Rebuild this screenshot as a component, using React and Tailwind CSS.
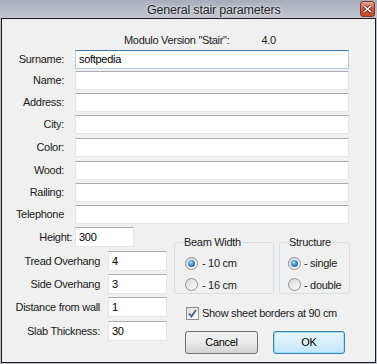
import React from 'react';

const font = { fontFamily: '"Liberation Sans", Arial, sans-serif' };

function TextBox({ value, focused, className }) {
  return (
    <div
      className={
        'bg-white border text-[11px] leading-none flex items-center pl-[3px] text-black ' +
        (focused
          ? 'border-[#b5cfe7] border-t-[#3d7bad] '
          : 'border-[#e2e6ec] border-t-[#abadb3] ') +
        className
      }
    >
      {value}
    </div>
  );
}

function Radio({ checked }) {
  return (
    <div className="w-[13px] h-[13px] rounded-full border border-[#8e8f8f] bg-gradient-to-br from-[#d9d9d9] to-[#fbfbfb] flex items-center justify-center">
      {checked && (
        <div className="w-[7px] h-[7px] rounded-full bg-[radial-gradient(circle_at_40%_35%,#a8dcf8,#2a73b8_60%,#1b4f86)]" />
      )}
    </div>
  );
}

function GroupBox({ title, className, children }) {
  return (
    <div className={'relative border border-[#d5dfe5] rounded-[3px] ' + className}>
      <span className="absolute -top-[7px] left-[8px] px-[1px] bg-[#f0f0f0] text-[11px] leading-[12px] tracking-[-0.3px]">
        {title}
      </span>
      {children}
    </div>
  );
}

export default function App() {
  const rows = [
    { label: 'Surname:', value: 'softpedia', mt: 'mt-[3px]', focused: true },
    { label: 'Name:', mt: 'mt-[2px]' },
    { label: 'Address:', mt: 'mt-[3px]' },
    { label: 'City:', mt: 'mt-[3px]' },
    { label: 'Color:', mt: 'mt-[4px]' },
    { label: 'Wood:', mt: 'mt-[4px]' },
    { label: 'Railing:', mt: 'mt-[3px]' },
    { label: 'Telephone', mt: 'mt-[3px]' },
  ];

  const params = [
    { label: 'Tread Overhang', value: '4', mt: 'mt-[4px]' },
    { label: 'Side Overhang', value: '3', mt: 'mt-[3px]' },
    { label: 'Distance from wall', value: '1', mt: 'mt-[3px]' },
    { label: 'Slab Thickness:', value: '30', mt: 'mt-[4px]' },
  ];

  return (
    <div className="w-[377px] h-[364px] bg-[#bcc1cb] overflow-hidden text-[#1a1a1a]" style={font}>
      {/* Title bar */}
      <div className="h-[18px] flex items-center bg-gradient-to-b from-[#a7adb9] via-[#b4b9c4] to-[#c2c6cf] relative">
        <span className="absolute left-[147px] top-[1px] text-[12.5px] tracking-[-0.2px] text-[#1e1e1e] [text-shadow:0_0_5px_#e8ebf0,0_0_2px_#e8ebf0]">
          General stair parameters
        </span>
        <div className="ml-auto mr-[2px] mb-[1px] w-[15px] h-[16px] rounded-[3px] border border-[#7a3b2e] bg-gradient-to-b from-[#e8a493] via-[#d2553a] to-[#c44a2c] flex items-center justify-center">
          <svg width="9" height="8" viewBox="0 0 9 8">
            <path d="M1 1 L8 7 M8 1 L1 7" stroke="#5a2418" strokeWidth="3" />
            <path d="M1 1 L8 7 M8 1 L1 7" stroke="#ffffff" strokeWidth="1.6" />
          </svg>
        </div>
      </div>

      {/* Dialog body */}
      <div className="ml-[1px] w-[375px] h-[345px] border border-[#1b1b1b] bg-[#f0f0f0] text-[11px] tracking-[-0.3px]">
        <div className="mt-[14px] h-[14px] flex items-center">
          <span className="ml-[122px]">Modulo Version "Stair":</span>
          <span className="ml-[32px]">4.0</span>
        </div>

        {rows.map((r) => (
          <div key={r.label} className={'flex items-center ' + r.mt}>
            <div className="w-[62px] text-right">{r.label}</div>
            <TextBox value={r.value} focused={r.focused} className="ml-[11px] w-[274px] h-[19px]" />
          </div>
        ))}

        <div className="flex mt-[3px]">
          {/* Left parameters */}
          <div className="w-[172px]">
            <div className="flex items-center">
              <div className="w-[70px] text-right">Height:</div>
              <TextBox value="300" className="ml-[3px] w-[59px] h-[20px]" />
            </div>
            {params.map((p) => (
              <div key={p.label} className={'flex items-center ' + p.mt}>
                <div className="w-[98px] text-right">{p.label}</div>
                <TextBox value={p.value} className="ml-[8px] w-[59px] h-[20px]" />
              </div>
            ))}
          </div>

          {/* Right options */}
          <div className="flex flex-col">
            <div className="flex mt-[15px] gap-[5px]">
              <GroupBox title="Beam Width" className="w-[100px] h-[52px] pl-[10px] pt-[12px]">
                <div className="flex items-center gap-[4px]">
                  <Radio checked />
                  <span>- 10 cm</span>
                </div>
                <div className="flex items-center gap-[4px] mt-[5px]">
                  <Radio />
                  <span>- 16 cm</span>
                </div>
              </GroupBox>
              <GroupBox title="Structure" className="w-[71px] h-[52px] pl-[8px] pt-[12px]">
                <div className="flex items-center gap-[3px]">
                  <Radio checked />
                  <span>- single</span>
                </div>
                <div className="flex items-center gap-[3px] mt-[5px]">
                  <Radio />
                  <span>- double</span>
                </div>
              </GroupBox>
            </div>

            <div className="flex items-center mt-[11px] ml-[12px] gap-[3px]">
              <div className="w-[13px] h-[13px] border border-[#8f8f8f] bg-gradient-to-br from-[#dcdcdc] to-[#fdfdfd] flex items-center justify-center">
                <svg width="9" height="9" viewBox="0 0 9 9">
                  <path d="M1 4.5 L3.5 7.5 L8 1" fill="none" stroke="#4a5f97" strokeWidth="1.8" />
                </svg>
              </div>
              <span>Show sheet borders at 90 cm</span>
            </div>

            <div className="flex mt-[9px] ml-[11px] gap-[15px]">
              <button className="w-[73px] h-[23px] rounded-[3px] border border-[#707070] bg-gradient-to-b from-[#f2f2f2] via-[#ebebeb] to-[#d3d3d3] text-[11px] tracking-[-0.3px] text-black">
                Cancel
              </button>
              <button className="w-[72px] h-[23px] rounded-[3px] border border-[#3c7fb1] bg-gradient-to-b from-[#e8f5fc] via-[#d9effa] to-[#bee6fd] shadow-[inset_0_0_0_1px_#9be0f8] text-[11px] tracking-[-0.3px] text-black">
                OK
              </button>
            </div>
          </div>
        </div>
      </div>
    </div>
  );
}
